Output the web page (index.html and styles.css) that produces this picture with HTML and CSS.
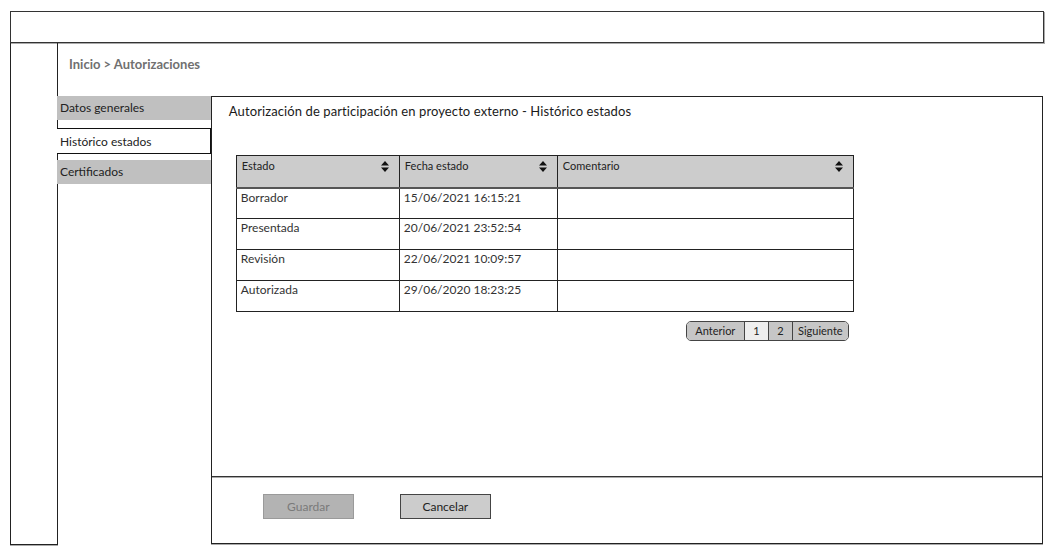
FILE: index.html
```html
<!DOCTYPE html>
<html lang="es">
<head>
<meta charset="utf-8">
<title>Autorizaciones</title>
<link rel="stylesheet" href="styles.css">
</head>
<body>
<div class="header"></div>
<div class="layout">
  <div class="rail"></div>
  <div class="content">
    <div class="crumb">Inicio &gt; Autorizaciones</div>
    <div class="main">
      <nav class="tabs">
        <div class="tab">Datos generales</div>
        <div class="tab active">Histórico estados</div>
        <div class="tab">Certificados</div>
      </nav>
      <section class="panel">
        <div class="panel-body">
          <h1 class="title">Autorización de participación en proyecto externo - Histórico estados</h1>
          <table class="grid">
            <colgroup><col class="c1"><col class="c2"><col class="c3"></colgroup>
            <thead>
              <tr>
                <th><div class="th">Estado<svg class="sort" viewBox="0 0 8 11"><path d="M4 0 L8 4.5 H0 Z M0 6.5 H8 L4 11 Z"/></svg></div></th>
                <th><div class="th">Fecha estado<svg class="sort" viewBox="0 0 8 11"><path d="M4 0 L8 4.5 H0 Z M0 6.5 H8 L4 11 Z"/></svg></div></th>
                <th><div class="th">Comentario<svg class="sort" viewBox="0 0 8 11"><path d="M4 0 L8 4.5 H0 Z M0 6.5 H8 L4 11 Z"/></svg></div></th>
              </tr>
            </thead>
            <tbody>
              <tr><td>Borrador</td><td>15/06/2021 16:15:21</td><td></td></tr>
              <tr><td>Presentada</td><td>20/06/2021 23:52:54</td><td></td></tr>
              <tr><td>Revisión</td><td>22/06/2021 10:09:57</td><td></td></tr>
              <tr><td>Autorizada</td><td>29/06/2020 18:23:25</td><td></td></tr>
            </tbody>
          </table>
          <div class="pager-row">
            <div class="pager">
              <span class="pg prev">Anterior</span><span class="pg num current">1</span><span class="pg num">2</span><span class="pg next">Siguiente</span>
            </div>
          </div>
        </div>
        <div class="panel-footer">
          <button class="btn disabled" type="button">Guardar</button>
          <button class="btn" type="button">Cancelar</button>
        </div>
      </section>
    </div>
  </div>
</div>
</body>
</html>
```
FILE: styles.css
```css
* { box-sizing: border-box; }
html, body { margin: 0; padding: 0; background: #fff; }
body {
  font-family: Lato, "Open Sans", "Liberation Sans", sans-serif;
  color: #222;
  width: 1050px;
  height: 550px;
  overflow: hidden;
}
.header {
  margin: 11px 0 0 10px;
  width: 1034px;
  height: 32px;
  border: 1px solid #333;
  box-shadow: 1px 1px 0 #aaa;
}
.layout {
  display: flex;
  margin-left: 10px;
}
.rail {
  width: 48px;
  height: 502px;
  border: 1px solid #222;
  border-top: none;
  box-shadow: 0 1px 0 #aaa;
}
.content {
  display: flex;
  flex-direction: column;
  width: 986px;
  margin-left: -1px;
}
.crumb {
  height: 53px;
  padding: 13px 0 0 12px;
  font-size: 13px;
  line-height: 17px;
  font-weight: 700;
  color: #707070;
}
.main { display: flex; }
.tabs {
  width: 154px;
  display: flex;
  flex-direction: column;
}
.tab {
  height: 24px;
  padding: 4px 3px 0;
  font-size: 12px;
  line-height: 16px;
  background: #c0c0c0;
  color: #222;
  margin-bottom: 8px;
}
.tab.active {
  background: #fff;
  height: 26px;
  border: 1px solid #111;
  border-left: none;
  padding-top: 5px;
  margin-bottom: 6px;
}
.panel {
  width: 833px;
  height: 448px;
  border: 1px solid #222;
  display: flex;
  flex-direction: column;
  box-shadow: 0 1px 0 #aaa;
}
.panel-body {
  flex: 1;
  padding: 5px 0 0 17px;
}
.title {
  margin: 0;
  font-size: 13px;
  line-height: 18px;
  font-weight: 400;
  color: #1a1a1a;
  letter-spacing: 0.1px;
}
.grid {
  margin: 35px 0 0 7px;
  border-collapse: collapse;
  width: 617px;
  table-layout: fixed;
  font-size: 12px;
}
.c1 { width: 163px; }
.c2 { width: 158px; }
.c3 { width: 296px; }
.grid th {
  background: #cccccc;
  height: 32px;
  border: 1px solid #222;
  border-bottom: 2px solid #555;
  padding: 3px 5px 0 5px;
  vertical-align: top;
  text-align: left;
  font-weight: 400;
  font-size: 11px;
  line-height: 14px;
  color: #222;
}
.th {
  display: flex;
  justify-content: space-between;
  align-items: flex-start;
  padding-right: 5px;
}
.sort {
  width: 8px;
  height: 11px;
  margin-top: 2px;
  fill: #111;
}
.grid td {
  height: 31px;
  border: 1px solid #222;
  padding: 0 4px;
  vertical-align: top;
  line-height: 17px;
  color: #333;
}
.pager-row {
  width: 617px;
  margin-left: 7px;
  display: flex;
  justify-content: flex-end;
  padding: 9px 4px 0 0;
}
.pager {
  display: flex;
  height: 20px;
  border: 1px solid #444;
  border-radius: 5px;
  overflow: hidden;
  font-size: 11px;
  line-height: 18px;
}
.pg {
  background: #c6c6c6;
  color: #222;
  text-align: center;
  border-left: 1px solid #444;
}
.pg:first-child { border-left: none; }
.prev { width: 57px; }
.num { width: 24px; }
.next { width: 56px; }
.current { background: #eeeeee; }
.panel-footer {
  height: 67px;
  border-top: 1px solid #333;
  box-shadow: inset 0 1px 0 #aaa;
  display: flex;
  align-items: flex-start;
  gap: 46px;
  padding: 17px 0 0 51px;
}
.btn {
  width: 91px;
  height: 25px;
  font-family: Lato, "Open Sans", "Liberation Sans", sans-serif;
  font-size: 12px;
  background: #cccccc;
  border: 1px solid #444;
  color: #222;
  border-radius: 0;
  padding: 0;
}
.btn.disabled {
  background: #b3b3b3;
  border-color: #9a9a9a;
  color: #7a7a7a;
}
```
